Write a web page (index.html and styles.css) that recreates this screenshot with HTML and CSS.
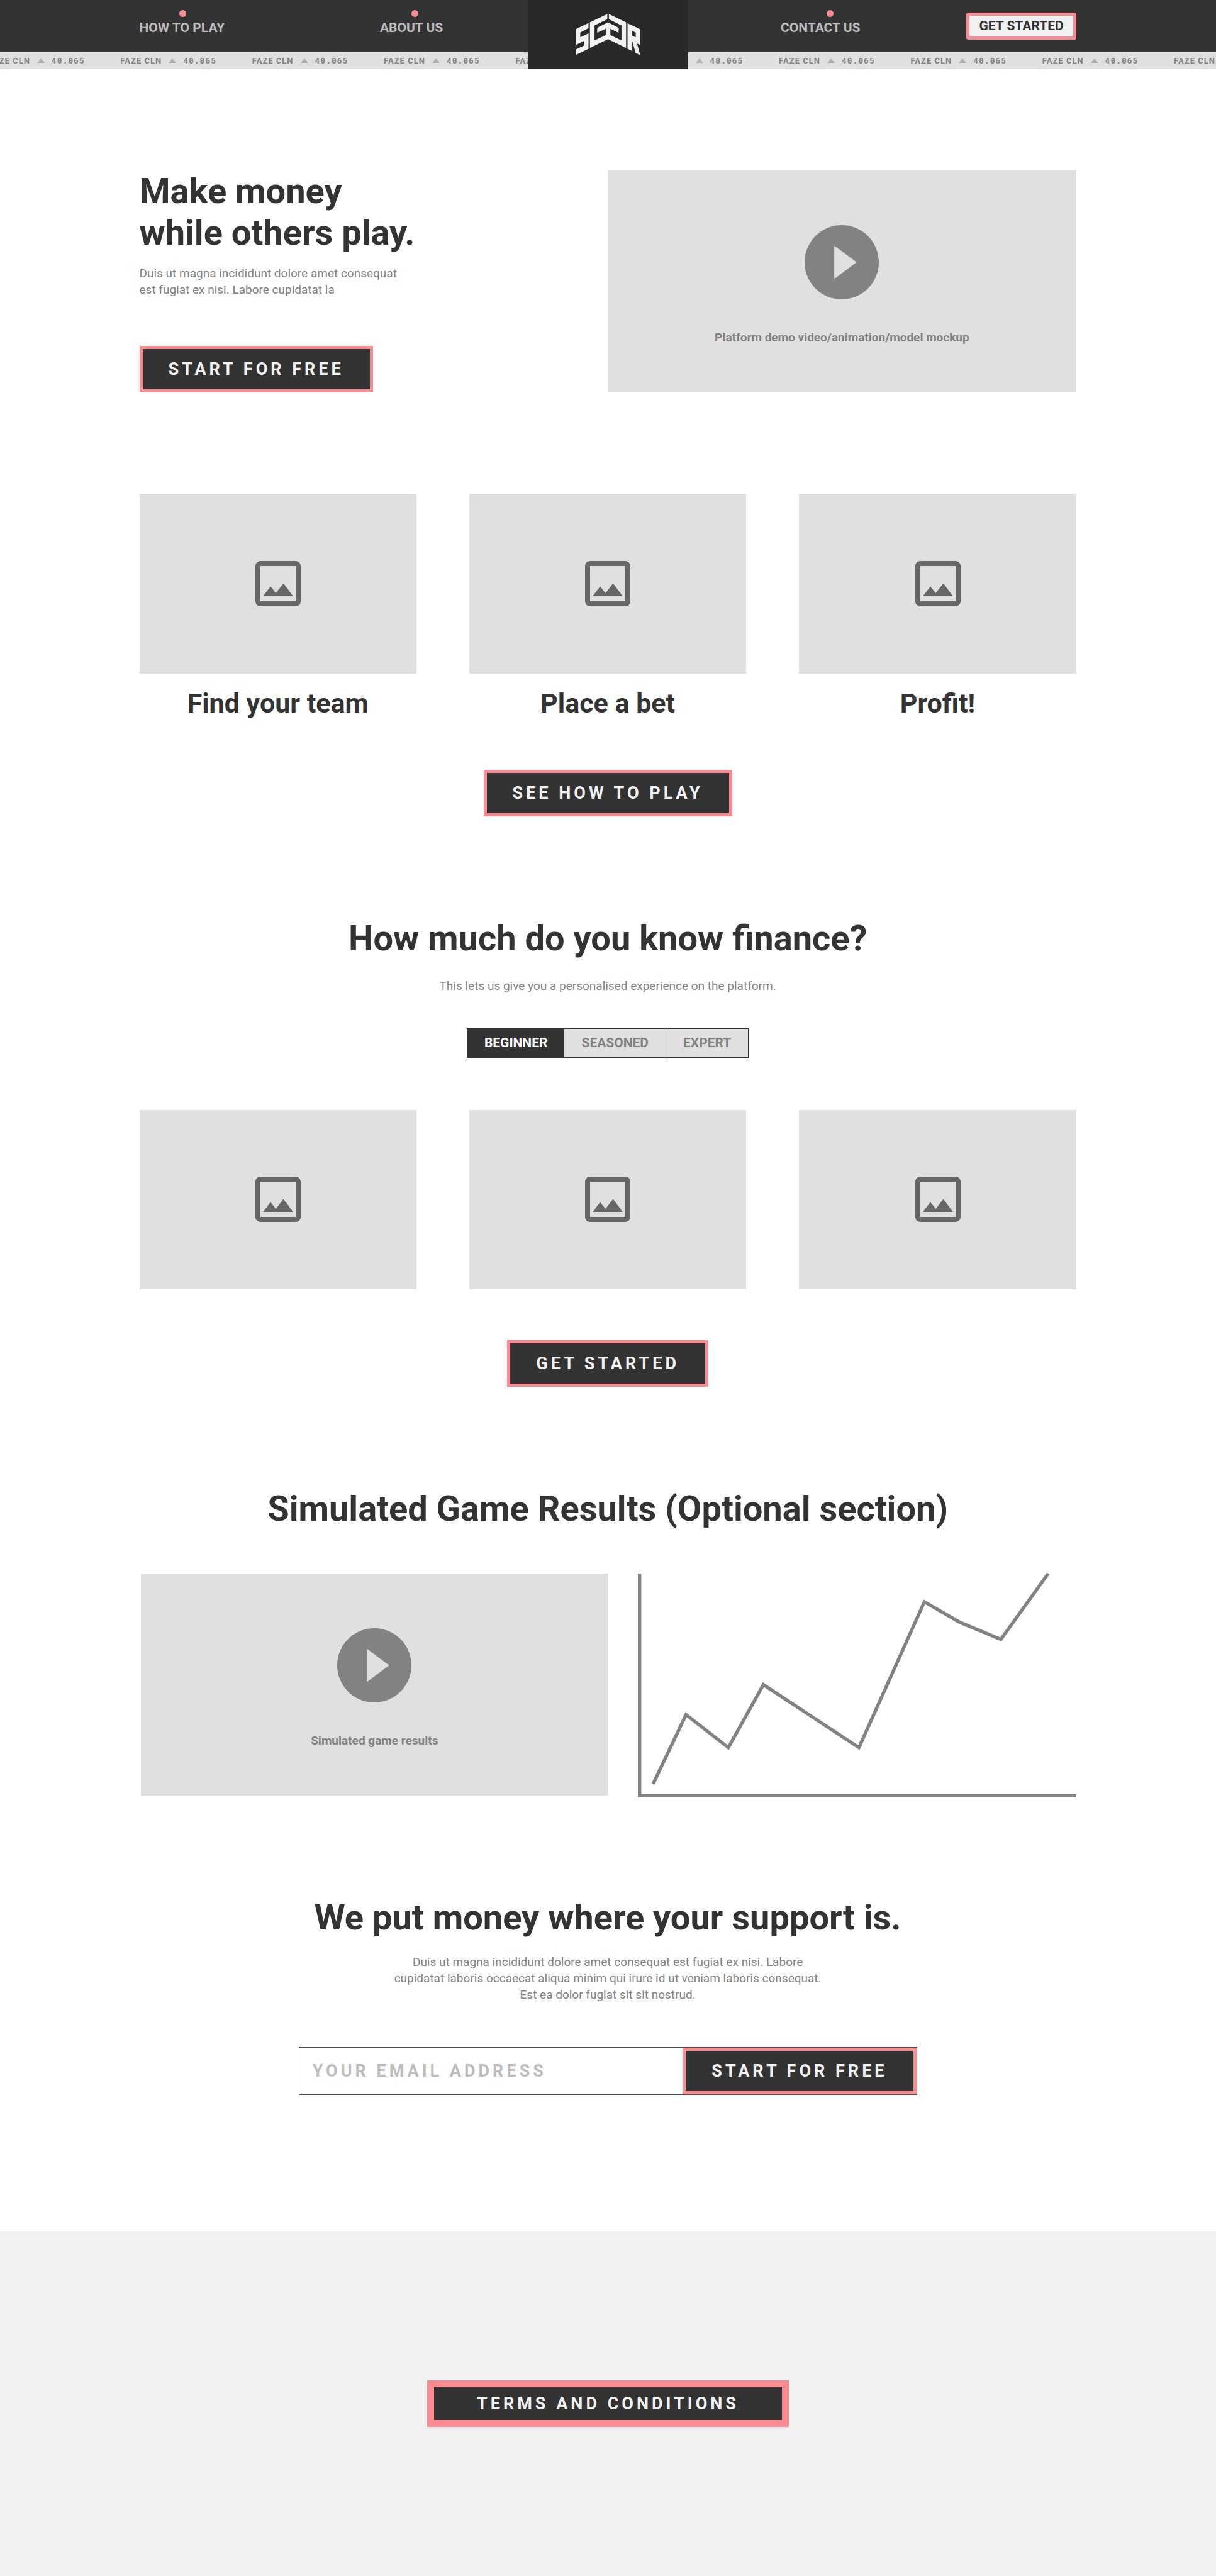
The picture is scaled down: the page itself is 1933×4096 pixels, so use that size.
FILE: index.html
```html
<!DOCTYPE html>
<html lang="en">
<head>
<meta charset="utf-8">
<meta name="viewport" content="width=device-width, initial-scale=1">
<title>Make money while others play</title>
<link rel="stylesheet" href="styles.css">
</head>
<body>
<svg class="sprite" aria-hidden="true">
  <symbol id="icon-play" viewBox="2 2 20 20"><path d="M12 2a10 10 0 1 0 0 20 10 10 0 0 0 0-20zM10 16.5v-9l6 4.5z"/></symbol>
  <symbol id="icon-image" viewBox="3 3 18 18"><path d="M19 5v14H5V5h14m0-2H5c-1.1 0-2 .9-2 2v14c0 1.1.9 2 2 2h14c1.1 0 2-.9 2-2V5c0-1.1-.9-2-2-2zm-4.860 8.860l-3 3.870L9 13.140 6 17h12l-3.860-5.140z"/></symbol>
</svg>

<header class="site-header">
  <nav class="nav nav-left" aria-label="Main">
    <a class="nav-link nav-link-how" href="#how">HOW TO PLAY</a>
    <a class="nav-link nav-link-about" href="#about">ABOUT US</a>
  </nav>
  <a class="logo" href="#top" aria-label="Home">
    <svg viewBox="396 96 462 294" aria-hidden="true">
      <path d="M488 160L396 205V318L455 288V321L396 349V389L488 344V234L429 262V228L488 197Z"/>
      <path d="M622 96L498 156V338L627 276L756 338V156L633 96V133L723 178V285L644 246V202L702 229L704 200L695 190L627 156L558 190Q550 196 550 203V229L611 202V246L531 285V178L622 133Z"/>
      <path fill-rule="evenodd" d="M766 162L858 205V318L834 307L857 389L824 374L800 289V360L766 344ZM799 216L825 228V262L799 250Z"/>
    </svg>
  </a>
  <nav class="nav nav-right" aria-label="Account">
    <a class="nav-link nav-link-contact" href="#contact">CONTACT US</a>
    <a class="nav-cta" href="#start">GET STARTED</a>
  </nav>
  <div class="ticker">
    <div class="tick"><span>FAZE CLN</span><i class="up"></i><span class="price">40.065</span></div>
    <div class="tick"><span>FAZE CLN</span><i class="up"></i><span class="price">40.065</span></div>
    <div class="tick"><span>FAZE CLN</span><i class="up"></i><span class="price">40.065</span></div>
    <div class="tick"><span>FAZE CLN</span><i class="up"></i><span class="price">40.065</span></div>
    <div class="tick"><span>FAZE CLN</span><i class="up"></i><span class="price">40.065</span></div>
    <div class="tick"><span>FAZE CLN</span><i class="up"></i><span class="price">40.065</span></div>
    <div class="tick"><span>FAZE CLN</span><i class="up"></i><span class="price">40.065</span></div>
    <div class="tick"><span>FAZE CLN</span><i class="up"></i><span class="price">40.065</span></div>
    <div class="tick"><span>FAZE CLN</span><i class="up"></i><span class="price">40.065</span></div>
    <div class="tick"><span>FAZE CLN</span><i class="up"></i><span class="price">40.065</span></div>
  </div>
</header>

<main class="page">
  <section class="hero">
    <div class="hero-copy">
      <h1 class="title">Make money<br>while others play.</h1>
      <p class="text">Duis ut magna incididunt dolore amet consequat<br>est fugiat ex nisi. Labore cupidatat la</p>
      <button class="button" type="button">START FOR FREE</button>
    </div>
    <div class="video">
      <button class="play" type="button" aria-label="Play demo"><svg><use href="#icon-play"/></svg></button>
      <p class="video-label">Platform demo video/animation/model mockup</p>
    </div>
  </section>

  <section class="block" id="how">
    <div class="cards">
      <figure class="card"><div class="picture"><svg><use href="#icon-image"/></svg></div><figcaption>Find your team</figcaption></figure>
      <figure class="card"><div class="picture"><svg><use href="#icon-image"/></svg></div><figcaption>Place a bet</figcaption></figure>
      <figure class="card"><div class="picture"><svg><use href="#icon-image"/></svg></div><figcaption>Profit!</figcaption></figure>
    </div>
    <button class="button" type="button">SEE HOW TO PLAY</button>
  </section>

  <section class="block" id="about">
    <h2 class="title">How much do you know finance?</h2>
    <p class="text level-text">This lets us give you a personalised experience on the platform.</p>
    <div class="levels" role="radiogroup" aria-label="Experience level">
      <input type="radio" name="level" id="beginner" checked><label for="beginner">BEGINNER</label>
      <input type="radio" name="level" id="seasoned"><label for="seasoned">SEASONED</label>
      <input type="radio" name="level" id="expert"><label for="expert">EXPERT</label>
    </div>
    <div class="cards">
      <div class="picture"><svg><use href="#icon-image"/></svg></div>
      <div class="picture"><svg><use href="#icon-image"/></svg></div>
      <div class="picture"><svg><use href="#icon-image"/></svg></div>
    </div>
    <button class="button" type="button">GET STARTED</button>
  </section>

  <section class="block">
    <h2 class="title">Simulated Game Results (Optional section)</h2>
    <div class="results">
      <div class="video">
        <button class="play" type="button" aria-label="Play results"><svg><use href="#icon-play"/></svg></button>
        <p class="video-label">Simulated game results</p>
      </div>
      <div class="chart">
        <svg viewBox="0 4 1037 530" role="img" aria-label="Results over time">
          <path d="M4 4V530H1037"/>
          <path d="M36 502L114 338L214 416L297 267L523 416L678 71L761 119L859 160L971 4"/>
        </svg>
      </div>
    </div>
  </section>

  <section class="block" id="start">
    <h2 class="title">We put money where your support is.</h2>
    <p class="text signup-text">Duis ut magna incididunt dolore amet consequat est fugiat ex nisi. Labore<br>cupidatat laboris occaecat aliqua minim qui irure id ut veniam laboris consequat.<br>Est ea dolor fugiat sit sit nostrud.</p>
    <form class="signup">
      <label class="hidden-label" for="email">Email address</label>
      <input class="email" id="email" type="email" placeholder="YOUR EMAIL ADDRESS">
      <button class="button" type="submit">START FOR FREE</button>
    </form>
  </section>
</main>

<footer class="site-footer" id="contact">
  <button class="button button-terms" type="button">TERMS AND CONDITIONS</button>
</footer>
</body>
</html>
```
FILE: styles.css
```css
:root {
  --gutter: 11.46vw;
  --gutter-end: 11.5vw;
  --ink: #333333;
  --grey: #828282;
  --panel: #e0e0e0;
  --pale: #f2f2f2;
  --accent: #f98b91;
}

* {
  box-sizing: border-box;
  margin: 0;
}

body {
  display: flex;
  flex-direction: column;
  min-height: 100vh;
  background: #ffffff;
  color: var(--ink);
  font-family: Roboto, "Liberation Sans", sans-serif;
}

a {
  color: inherit;
  text-decoration: none;
}

.sprite {
  position: absolute;
  width: 0;
  height: 0;
}

/* Header */
.site-header {
  display: grid;
  grid-template-columns: 1fr 255px 1fr;
  grid-template-rows: 83px 27px;
  background: var(--ink);
}

.nav {
  display: flex;
  justify-content: space-between;
  align-items: flex-start;
}

.nav-left {
  grid-area: 1 / 1;
  padding: 16px 124px 0 var(--gutter);
}

.nav-right {
  grid-area: 1 / 3;
  padding: 16px var(--gutter-end) 0 147px;
}

.nav-link {
  color: #bdbdbd;
  font-size: 21px;
  font-weight: 700;
  line-height: 26px;
  white-space: nowrap;
}

.nav-link::before {
  content: "";
  display: block;
  width: 11px;
  height: 11px;
  margin: 0 auto 4px;
  border-radius: 50%;
  background: var(--accent);
}

.nav-link-how {
  width: 138px;
}

.nav-link-about {
  width: 111px;
}

.nav-link-contact {
  width: 156px;
}

.nav-cta {
  margin-top: 4px;
  padding: 3px 15px;
  border: 5px solid var(--accent);
  border-radius: 3px;
  background: var(--pale);
  color: var(--ink);
  font-size: 21px;
  font-weight: 700;
  line-height: 27px;
  white-space: nowrap;
}

.logo {
  grid-area: 1 / 2 / 3 / 3;
  z-index: 1;
  display: flex;
  align-items: center;
  justify-content: center;
  background: #292929;
}

.logo svg {
  width: 103px;
  height: 66px;
  fill: var(--pale);
}

.ticker {
  grid-area: 2 / 1 / 3 / 4;
  display: flex;
  overflow: hidden;
  background: var(--panel);
  color: var(--grey);
  font-size: 13px;
  font-weight: 700;
  letter-spacing: 1px;
  line-height: 25px;
}

.tick {
  flex: 0 0 10.83%;
  display: flex;
  align-items: center;
  gap: 11px;
  white-space: nowrap;
}

.tick:first-child {
  margin-left: -18px;
}

.up {
  width: 0;
  border: 6px solid transparent;
  border-top: 0;
  border-bottom: 7px solid #b0b0b0;
}

.price {
  font-family: "Roboto Mono", "DejaVu Sans Mono", monospace;
}

/* Shared pieces */
.page {
  display: flex;
  flex-direction: column;
  gap: 161px;
  padding: 161px var(--gutter-end) 217px var(--gutter);
}

.block {
  display: flex;
  flex-direction: column;
  align-items: center;
}

.title {
  font-size: 56px;
  font-weight: 700;
  line-height: 66px;
}

.text {
  color: var(--grey);
  font-size: 19px;
  line-height: 26px;
}

.button {
  padding: 16px 41px;
  border: 5px solid var(--accent);
  background: var(--ink);
  color: var(--pale);
  font-family: inherit;
  font-size: 27px;
  font-weight: 700;
  letter-spacing: 5px;
  line-height: 32px;
  white-space: nowrap;
}

.video {
  display: flex;
  flex-direction: column;
  align-items: center;
  gap: 48px;
  aspect-ratio: 744 / 353;
  padding-top: 87px;
  background: var(--panel);
}

.play {
  width: 118px;
  height: 118px;
  padding: 0;
  border: 0;
  background: none;
}

.play svg {
  display: block;
  width: 118px;
  height: 118px;
  fill: var(--grey);
}

.video-label {
  color: var(--grey);
  font-size: 19px;
  font-weight: 700;
  line-height: 26px;
}

/* Hero */
.hero {
  display: grid;
  grid-template-columns: 1fr 1fr;
}

.hero-copy {
  display: flex;
  flex-direction: column;
  align-items: flex-start;
}

.hero-copy .text {
  margin-top: 19px;
}

.hero-copy .button {
  margin-top: auto;
}

/* Picture cards */
.cards {
  align-self: stretch;
  display: grid;
  grid-template-columns: repeat(3, 1fr);
  gap: 84px;
  margin-bottom: 81px;
}

.picture {
  display: flex;
  align-items: center;
  justify-content: center;
  aspect-ratio: 440 / 285;
  background: var(--panel);
}

.picture svg {
  width: 72px;
  height: 72px;
  fill: #666666;
}

.card figcaption {
  margin-top: 22px;
  font-size: 43px;
  font-weight: 700;
  line-height: 50px;
  text-align: center;
}

/* Level picker */
.level-text {
  margin-top: 30px;
}

.levels {
  display: flex;
  margin: 54px 0 83px;
  border: 1px solid var(--ink);
  background: var(--panel);
}

.levels input,
.hidden-label {
  position: absolute;
  width: 1px;
  height: 1px;
  overflow: hidden;
  opacity: 0;
}

.levels label {
  padding: 0 27px;
  color: var(--grey);
  font-size: 21px;
  font-weight: 700;
  line-height: 45px;
}

.levels label + input + label + input + label {
  border-left: 1px solid var(--ink);
}

.levels input:checked + label {
  background: var(--ink);
  color: #ffffff;
}

/* Results */
.results {
  align-self: stretch;
  display: grid;
  grid-template-columns: 1fr 1fr;
  margin-top: 70px;
  padding-left: 2px;
}

.results .video {
  align-self: start;
}

.chart {
  margin-bottom: -3px;
  padding-left: 47px;
}

.chart svg {
  display: block;
  width: 100%;
  overflow: visible;
  fill: none;
  stroke: var(--grey);
  stroke-width: 8;
}

/* Sign-up */
.signup-text {
  margin-top: 25px;
  text-align: center;
}

.signup {
  display: flex;
  width: 66%;
  margin-top: 70px;
  border: 1px solid #4f4f4f;
}

.email {
  flex: 1;
  min-width: 0;
  padding: 0 21px;
  border: 0;
  background: none;
  color: var(--ink);
  font-family: inherit;
  font-size: 27px;
  font-weight: 700;
  letter-spacing: 5px;
}

.email::placeholder {
  color: #bdbdbd;
  opacity: 1;
}

/* Footer */
.site-footer {
  flex-grow: 1;
  display: flex;
  align-items: flex-start;
  justify-content: center;
  padding: 237px 0;
  background: var(--pale);
}

.button-terms {
  padding: 10px 68px;
  border-width: 11px;
}
```
